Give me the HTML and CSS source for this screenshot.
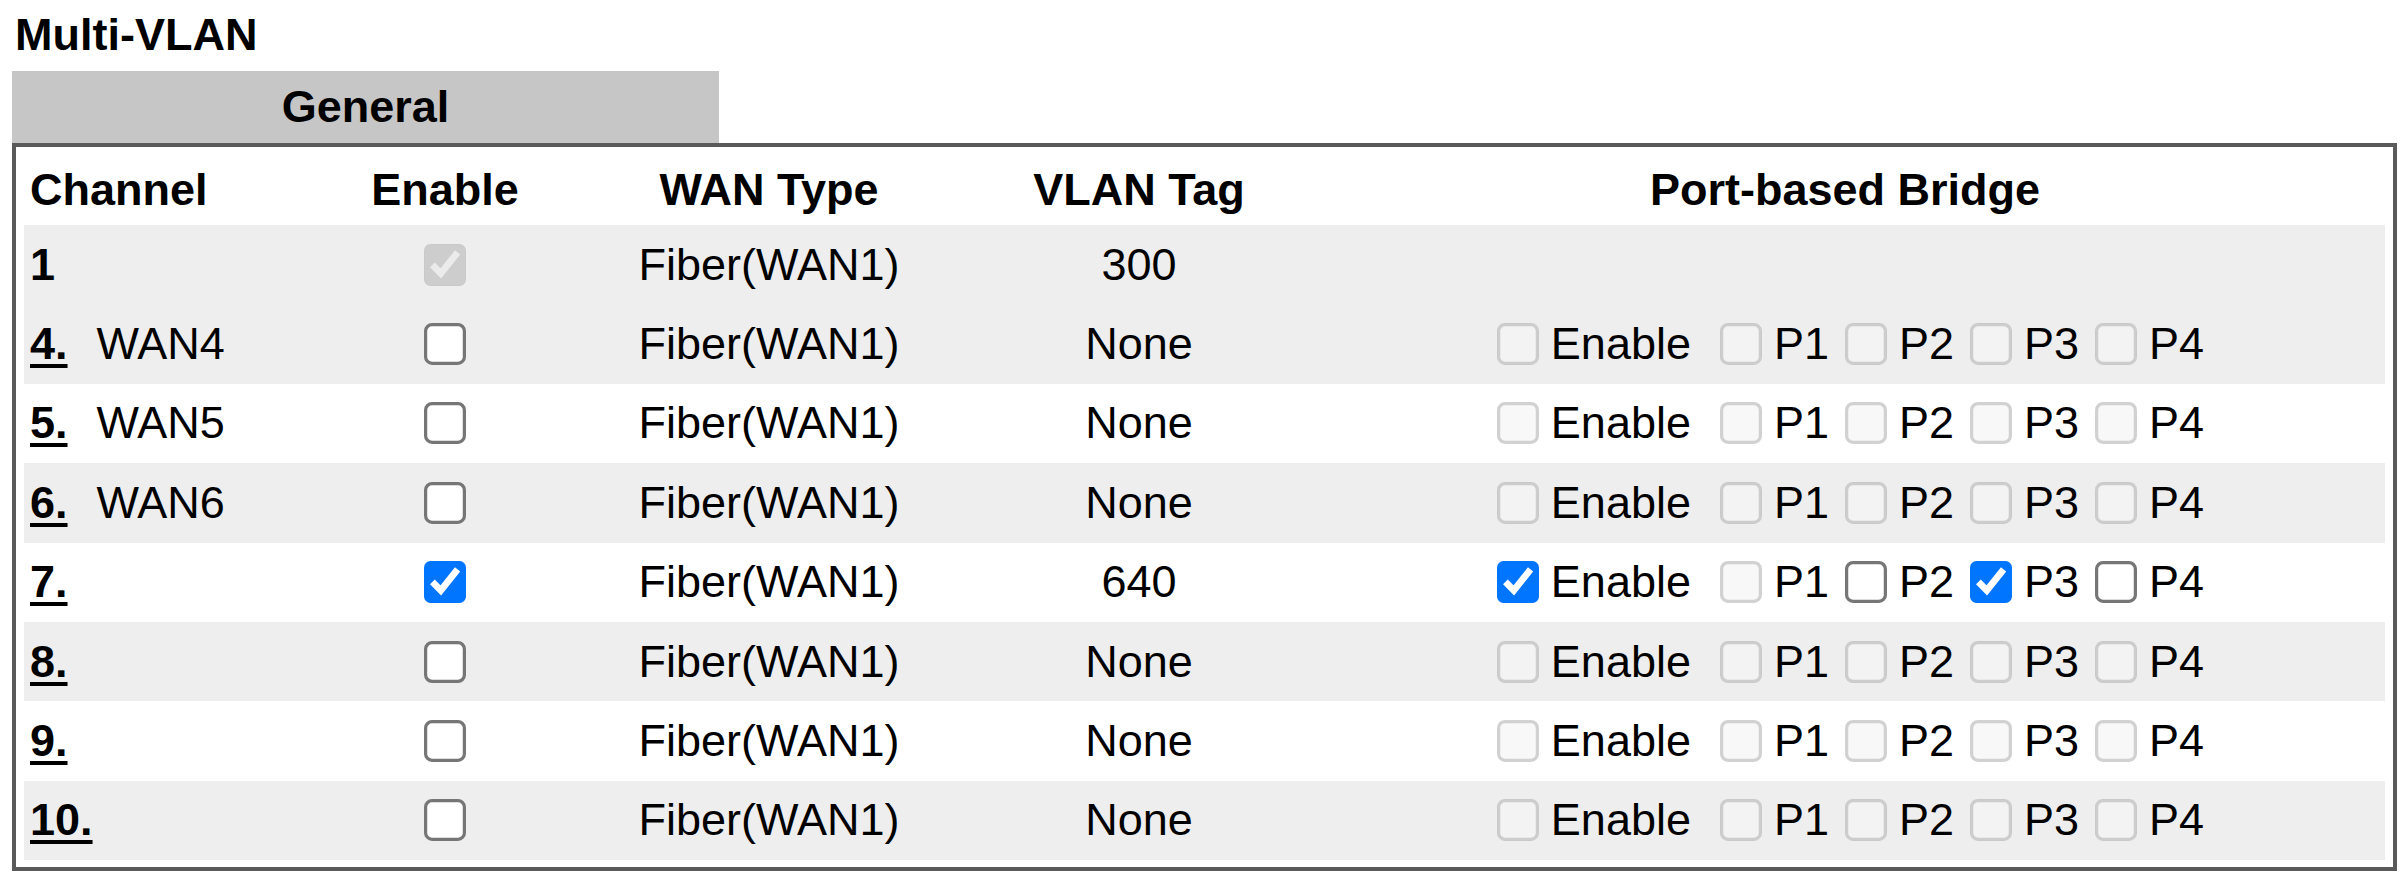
FILE: index.html
```html
<!DOCTYPE html>
<html lang="en">
<head>
<meta charset="utf-8">
<title>Multi-VLAN</title>
<link rel="stylesheet" href="styles.css">
</head>
<body>
<div class="page">
  <h1 class="title">Multi-VLAN</h1>
  <div class="tab">General</div>
  <div class="panel">
    <table class="grid">
      <colgroup>
        <col class="w-ch"><col class="w-en"><col class="w-wan"><col class="w-tag"><col class="w-br">
      </colgroup>
      <thead>
        <tr class="head">
          <th class="ch">Channel</th>
          <th>Enable</th>
          <th>WAN Type</th>
          <th>VLAN Tag</th>
          <th>Port-based Bridge</th>
        </tr>
      </thead>
      <tbody>
        <tr class="row shade">
          <td class="ch"><b>1</b></td>
          <td><input class="cb" type="checkbox" checked disabled></td>
          <td>Fiber(WAN1)</td>
          <td>300</td>
          <td></td>
        </tr>
        <tr class="row shade">
          <td class="ch"><a class="num" href="#">4.</a><span class="name">WAN4</span></td>
          <td><input class="cb" type="checkbox"></td>
          <td>Fiber(WAN1)</td>
          <td>None</td>
          <td><div class="bridge"><input class="cb" type="checkbox" disabled><span class="lbl first">Enable</span><input class="cb" type="checkbox" disabled><span class="lbl">P1</span><input class="cb" type="checkbox" disabled><span class="lbl">P2</span><input class="cb" type="checkbox" disabled><span class="lbl">P3</span><input class="cb" type="checkbox" disabled><span class="lbl last">P4</span></div></td>
        </tr>
        <tr class="row">
          <td class="ch"><a class="num" href="#">5.</a><span class="name">WAN5</span></td>
          <td><input class="cb" type="checkbox"></td>
          <td>Fiber(WAN1)</td>
          <td>None</td>
          <td><div class="bridge"><input class="cb" type="checkbox" disabled><span class="lbl first">Enable</span><input class="cb" type="checkbox" disabled><span class="lbl">P1</span><input class="cb" type="checkbox" disabled><span class="lbl">P2</span><input class="cb" type="checkbox" disabled><span class="lbl">P3</span><input class="cb" type="checkbox" disabled><span class="lbl last">P4</span></div></td>
        </tr>
        <tr class="row shade">
          <td class="ch"><a class="num" href="#">6.</a><span class="name">WAN6</span></td>
          <td><input class="cb" type="checkbox"></td>
          <td>Fiber(WAN1)</td>
          <td>None</td>
          <td><div class="bridge"><input class="cb" type="checkbox" disabled><span class="lbl first">Enable</span><input class="cb" type="checkbox" disabled><span class="lbl">P1</span><input class="cb" type="checkbox" disabled><span class="lbl">P2</span><input class="cb" type="checkbox" disabled><span class="lbl">P3</span><input class="cb" type="checkbox" disabled><span class="lbl last">P4</span></div></td>
        </tr>
        <tr class="row">
          <td class="ch"><a class="num" href="#">7.</a></td>
          <td><input class="cb" type="checkbox" checked></td>
          <td>Fiber(WAN1)</td>
          <td>640</td>
          <td><div class="bridge"><input class="cb" type="checkbox" checked><span class="lbl first">Enable</span><input class="cb" type="checkbox" disabled><span class="lbl">P1</span><input class="cb" type="checkbox"><span class="lbl">P2</span><input class="cb" type="checkbox" checked><span class="lbl">P3</span><input class="cb" type="checkbox"><span class="lbl last">P4</span></div></td>
        </tr>
        <tr class="row shade">
          <td class="ch"><a class="num" href="#">8.</a></td>
          <td><input class="cb" type="checkbox"></td>
          <td>Fiber(WAN1)</td>
          <td>None</td>
          <td><div class="bridge"><input class="cb" type="checkbox" disabled><span class="lbl first">Enable</span><input class="cb" type="checkbox" disabled><span class="lbl">P1</span><input class="cb" type="checkbox" disabled><span class="lbl">P2</span><input class="cb" type="checkbox" disabled><span class="lbl">P3</span><input class="cb" type="checkbox" disabled><span class="lbl last">P4</span></div></td>
        </tr>
        <tr class="row">
          <td class="ch"><a class="num" href="#">9.</a></td>
          <td><input class="cb" type="checkbox"></td>
          <td>Fiber(WAN1)</td>
          <td>None</td>
          <td><div class="bridge"><input class="cb" type="checkbox" disabled><span class="lbl first">Enable</span><input class="cb" type="checkbox" disabled><span class="lbl">P1</span><input class="cb" type="checkbox" disabled><span class="lbl">P2</span><input class="cb" type="checkbox" disabled><span class="lbl">P3</span><input class="cb" type="checkbox" disabled><span class="lbl last">P4</span></div></td>
        </tr>
        <tr class="row shade">
          <td class="ch"><a class="num" href="#">10.</a></td>
          <td><input class="cb" type="checkbox"></td>
          <td>Fiber(WAN1)</td>
          <td>None</td>
          <td><div class="bridge"><input class="cb" type="checkbox" disabled><span class="lbl first">Enable</span><input class="cb" type="checkbox" disabled><span class="lbl">P1</span><input class="cb" type="checkbox" disabled><span class="lbl">P2</span><input class="cb" type="checkbox" disabled><span class="lbl">P3</span><input class="cb" type="checkbox" disabled><span class="lbl last">P4</span></div></td>
        </tr>
      </tbody>
    </table>
  </div>
</div>
</body>
</html>
```

FILE: styles.css
```css
html, body {
  margin: 0;
  padding: 0;
  background: #ffffff;
}

body {
  font-family: "Liberation Sans", Arial, sans-serif;
  font-size: 45px;
  color: #000000;
}

.page {
  padding: 0 12px;
}

.title {
  margin: 0;
  padding: 9px 0 0 3px;
  height: 52px;
  line-height: 52px;
  font-size: 45px;
  font-weight: bold;
}

.tab {
  margin-top: 10px;
  width: 707px;
  height: 72px;
  line-height: 72px;
  background: #c6c6c6;
  text-align: center;
  font-weight: bold;
}

.panel {
  width: 2361px;
  border: 4px solid #5a5a5a;
  padding: 8px 8px 7px 8px;
}

.grid {
  border-collapse: collapse;
  border-spacing: 0;
  table-layout: fixed;
  width: 2361px;
}

.w-ch { width: 301px; }
.w-en { width: 240px; }
.w-wan { width: 408px; }
.w-tag { width: 332px; }
.w-br { width: 1080px; }

.grid th,
.grid td {
  padding: 0;
  text-align: center;
  vertical-align: middle;
  white-space: nowrap;
}

.grid th {
  font-weight: bold;
}

.grid .ch {
  text-align: left;
  padding-left: 6px;
}

.head {
  height: 70px;
}

.row {
  height: 79.375px;
}

.shade {
  background: #eeeeee;
}

.num {
  color: #000000;
  font-weight: bold;
  text-decoration: underline;
  text-decoration-thickness: 4px;
  text-underline-offset: 5px;
}

.name {
  margin-left: 29px;
}

.cb {
  zoom: 3.23;
  margin: 0;
}

.grid td > .cb {
  display: block;
  margin: 0 auto;
}

.bridge {
  display: flex;
  justify-content: center;
  align-items: center;
}

.bridge > .cb:first-child {
  margin-left: 3.4px;
}

.lbl {
  margin: 0 16px 0 12px;
}

.lbl.first {
  margin-right: 29px;
}

.lbl.last {
  margin-right: 0;
}
```
